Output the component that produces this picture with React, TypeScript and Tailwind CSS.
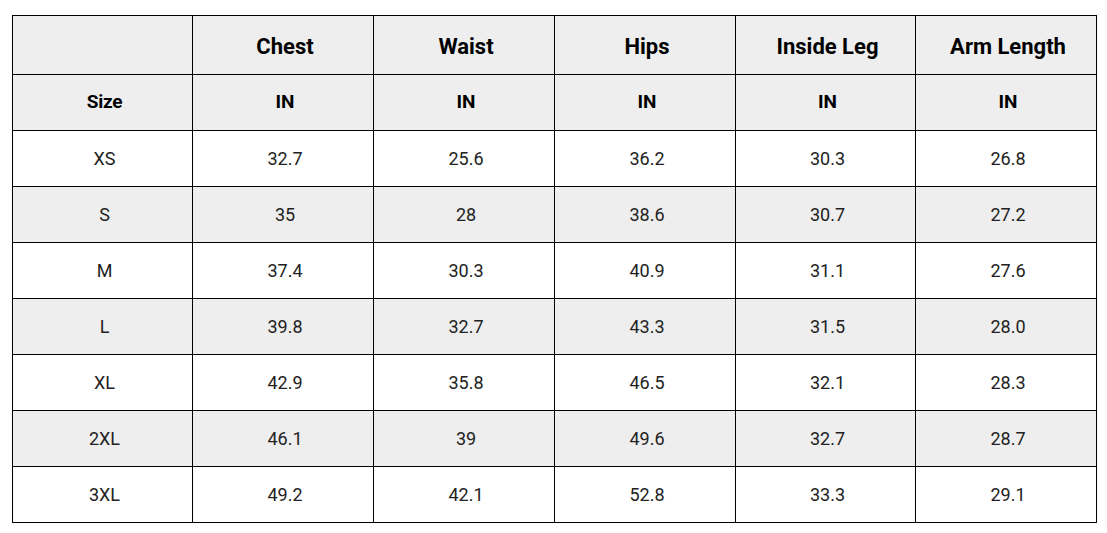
import React from "react";

const cols = ["Chest", "Waist", "Hips", "Inside Leg", "Arm Length"];
const rows: [string, string[]][] = [
  ["XS", ["32.7", "25.6", "36.2", "30.3", "26.8"]],
  ["S", ["35", "28", "38.6", "30.7", "27.2"]],
  ["M", ["37.4", "30.3", "40.9", "31.1", "27.6"]],
  ["L", ["39.8", "32.7", "43.3", "31.5", "28.0"]],
  ["XL", ["42.9", "35.8", "46.5", "32.1", "28.3"]],
  ["2XL", ["46.1", "39", "49.6", "32.7", "28.7"]],
  ["3XL", ["49.2", "42.1", "52.8", "33.3", "29.1"]],
];

export default function App() {
  return (
    <div className="bg-white w-[1107px] h-[533px] pl-[12px] pt-[15px]" style={{ fontFamily: "Roboto, 'Liberation Sans', sans-serif" }}>
      <table className="table-fixed border-collapse w-[1085px]">
        <colgroup>
          <col className="w-[180px]" />
          <col className="w-[181px]" />
          <col className="w-[181px]" />
          <col className="w-[181px]" />
          <col className="w-[180px]" />
          <col className="w-[181px]" />
        </colgroup>
        <tbody>
          <tr className="h-[59px] bg-[#eeeeee]">
            <td className="border border-black"></td>
            {cols.map((c) => (
              <td key={c} className="border border-black text-center font-bold text-[22px] text-black pl-[4px] pt-[2px]">
                {c}
              </td>
            ))}
          </tr>
          <tr className="h-[56px] bg-[#eeeeee]">
            <td className="border border-black text-center font-bold text-[19px] text-black tracking-[-0.3px] pl-[4px]">Size</td>
            {cols.map((c) => (
              <td key={c} className="border border-black text-center font-bold text-[19px] text-black pl-[4px]">
                IN
              </td>
            ))}
          </tr>
          {rows.map(([s, v], i) => (
            <tr key={s} className={`h-[56px] ${i % 2 === 1 ? "bg-[#eeeeee]" : "bg-white"}`}>
              <td className="border border-black text-center text-[18px] text-[#222222] pl-[4px]">{s}</td>
              {v.map((x, j) => (
                <td key={j} className="border border-black text-center text-[18px] text-[#222222] pl-[4px]">
                  {x}
                </td>
              ))}
            </tr>
          ))}
        </tbody>
      </table>
    </div>
  );
}
